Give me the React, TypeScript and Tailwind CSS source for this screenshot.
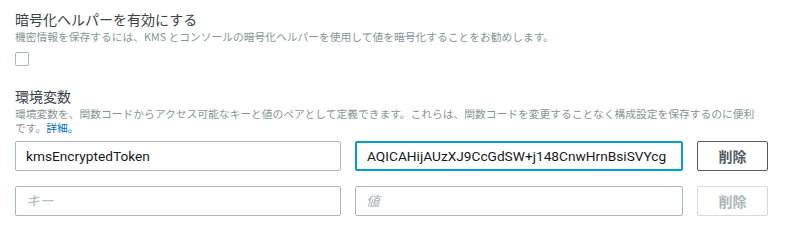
import React from 'react';

const jp = { fontFamily: '"Noto Sans CJK JP", "Noto Sans", sans-serif' };

const Field = ({ value, placeholder, focused }: { value?: string; placeholder?: string; focused?: boolean }) => (
  <input
    readOnly
    value={value ?? ''}
    placeholder={placeholder}
    className={
      'h-[30px] w-full rounded-[2px] bg-white text-[13.7px] text-[#16191f] outline-none placeholder:italic placeholder:text-[#aab7b8] ' +
      (focused ? 'border-2 border-[#00a1c9] pl-[10px] pr-[6px]' : 'border border-[#aab7b8] px-[10px]')
    }
    style={{ fontFamily: 'Roboto, "Noto Sans CJK JP", sans-serif' }}
  />
);

export default function App() {
  return (
    <div className="h-[249px] w-[789px] bg-white pl-[15px] pt-[9px]" style={jp}>
      <div className="text-[14px] leading-[20px] text-[#3b4248]">暗号化ヘルパーを有効にする</div>
      <p className="mt-[1px] text-[10.75px] leading-[14px] text-[#879596]">
        機密情報を保存するには、KMS とコンソールの暗号化ヘルパーを使用して値を暗号化することをお勧めします。
      </p>
      <div className="mt-[8px] h-[14px] w-[14px] rounded-[2px] border border-[#aab7b8] bg-white" />

      <div className="mt-[20px] text-[14px] leading-[20px] text-[#3b4248]">環境変数</div>
      <p className="mt-[1px] w-[745px] text-[10.75px] leading-[14px] text-[#879596]">
        <span className="block">
          環境変数を、関数コードからアクセス可能なキーと値のペアとして定義できます。これらは、関数コードを変更することなく構成設定を保存するのに便利
        </span>
        <span className="block">
          です。<a href="#" className="text-[#0073bb]">詳細。</a>
        </span>
      </p>

      <div className="mt-[6px] flex w-[753px] flex-col gap-[15px]">
        <div className="grid grid-cols-[326px_328px_71px] gap-[14px]">
          <Field value="kmsEncryptedToken" />
          <Field value="AQICAHijAUzXJ9CcGdSW+j148CnwHrnBsiSVYcg" focused />
          <button className="h-[30px] rounded-[2px] border border-[#545b64] text-[14px] font-bold text-[#545b64]">
            削除
          </button>
        </div>
        <div className="grid grid-cols-[326px_328px_71px] gap-[14px]">
          <Field placeholder="キー" />
          <Field placeholder="値" />
          <button disabled className="h-[30px] rounded-[2px] border border-[#d5dbdb] text-[14px] font-bold text-[#aab7b8]">
            削除
          </button>
        </div>
      </div>
    </div>
  );
}
